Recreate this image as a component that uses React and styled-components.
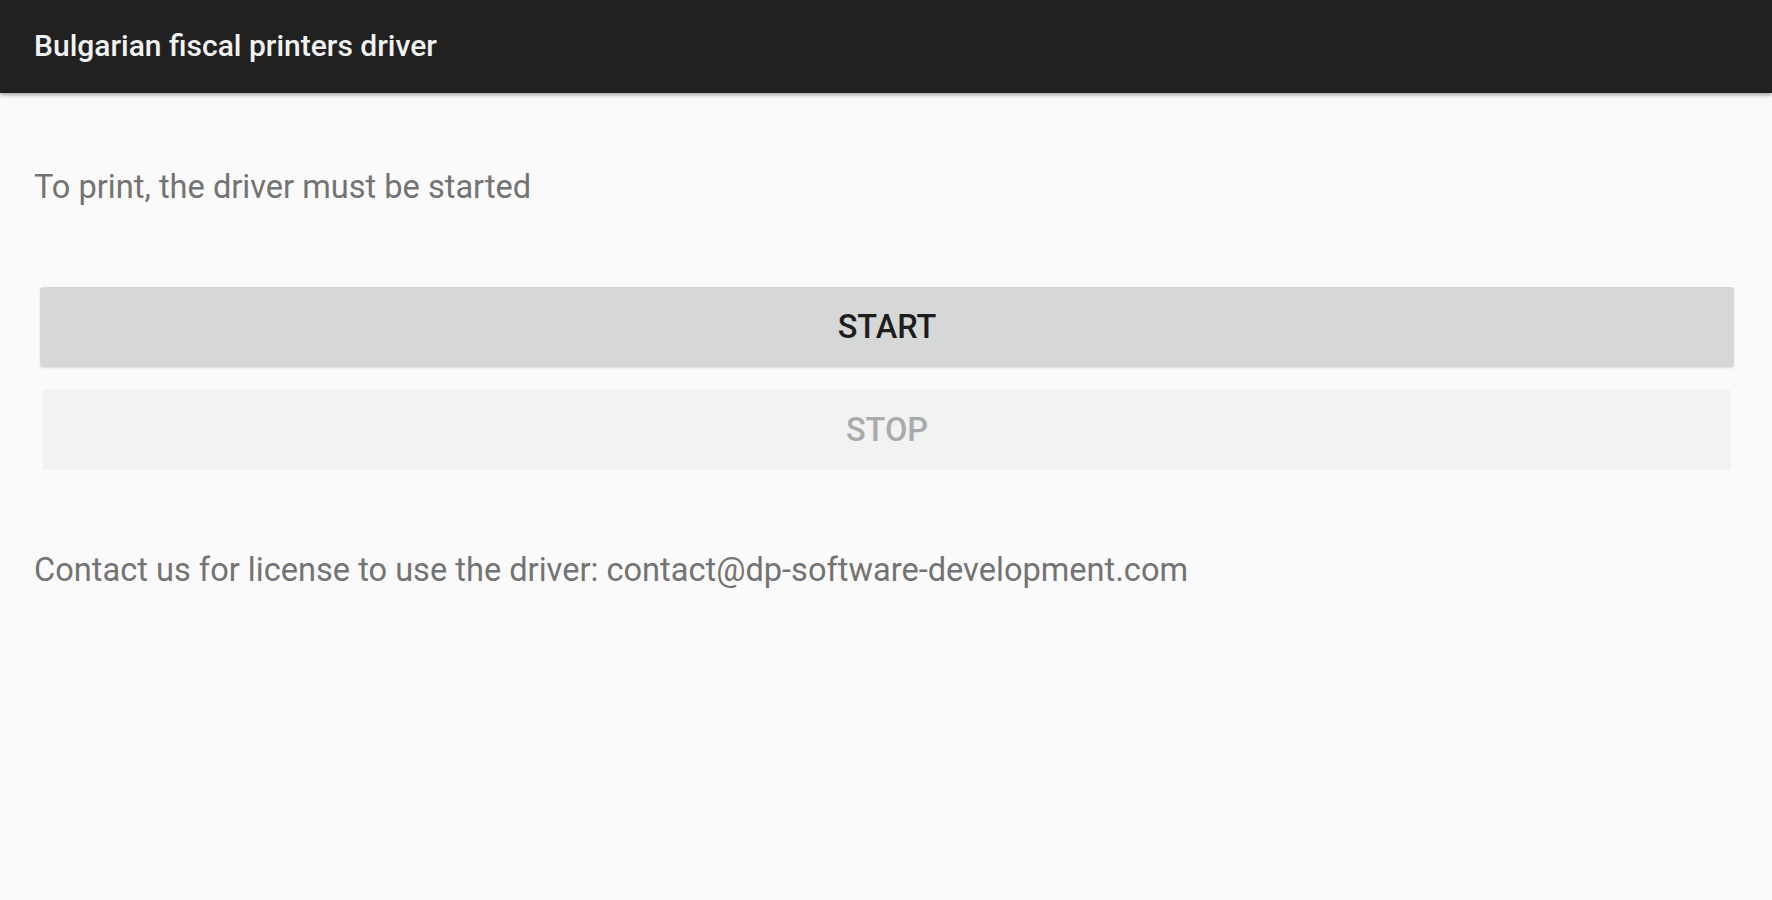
import React from "react";
import styled, { createGlobalStyle } from "styled-components";

const Global = createGlobalStyle`
  html, body { margin: 0; padding: 0; background: #fafafa; }
  body { font-family: Roboto, "Noto Sans", "Liberation Sans", sans-serif; }
`;

const Page = styled.div`
  min-height: 900px;
  background: #fafafa;
  display: flex;
  flex-direction: column;
`;

const AppBar = styled.header`
  height: 93px;
  background: #212121;
  display: flex;
  align-items: center;
  padding: 0 34px 2px;
  box-shadow: 0 2px 4px rgba(0, 0, 0, 0.35);
  box-sizing: border-box;
`;

const Title = styled.h1`
  margin: 0;
  font-size: 30px;
  font-weight: 500;
  color: #f2f2f2;
  letter-spacing: 0;
`;

const Content = styled.main`
  display: flex;
  flex-direction: column;
  padding: 0 38px 0 34px;
`;

const Text = styled.p`
  margin: ${(p) => p.$mt}px 0 0;
  font-size: 32.6px;
  line-height: 40px;
  color: #737373;
`;

const Buttons = styled.div`
  display: flex;
  flex-direction: column;
  gap: 23px;
  margin-top: 80px;
  padding: 0 0 0 6px;
`;

const Button = styled.button`
  height: 80px;
  border: none;
  border-radius: 3px;
  font-family: inherit;
  font-size: 32.5px;
  font-weight: 500;
  text-transform: uppercase;
  background: ${(p) => (p.disabled ? "#f1f2f2" : "#d6d7d7")};
  color: ${(p) => (p.disabled ? "#a9aaaa" : "#1d1d1d")};
  box-shadow: ${(p) =>
    p.disabled ? "none" : "0 1px 2px rgba(0,0,0,0.12)"};
  margin: ${(p) => (p.disabled ? "0 3px" : "0")};
  cursor: pointer;
`;

export default function App() {
  return (
    <>
      <Global />
      <Page>
        <AppBar>
          <Title>Bulgarian fiscal printers driver</Title>
        </AppBar>
        <Content>
          <Text $mt={74}>To print, the driver must be started</Text>
          <Buttons>
            <Button>Start</Button>
            <Button disabled>Stop</Button>
          </Buttons>
          <Text $mt={80}>
            Contact us for license to use the driver: contact@dp-software-development.com
          </Text>
        </Content>
      </Page>
    </>
  );
}
